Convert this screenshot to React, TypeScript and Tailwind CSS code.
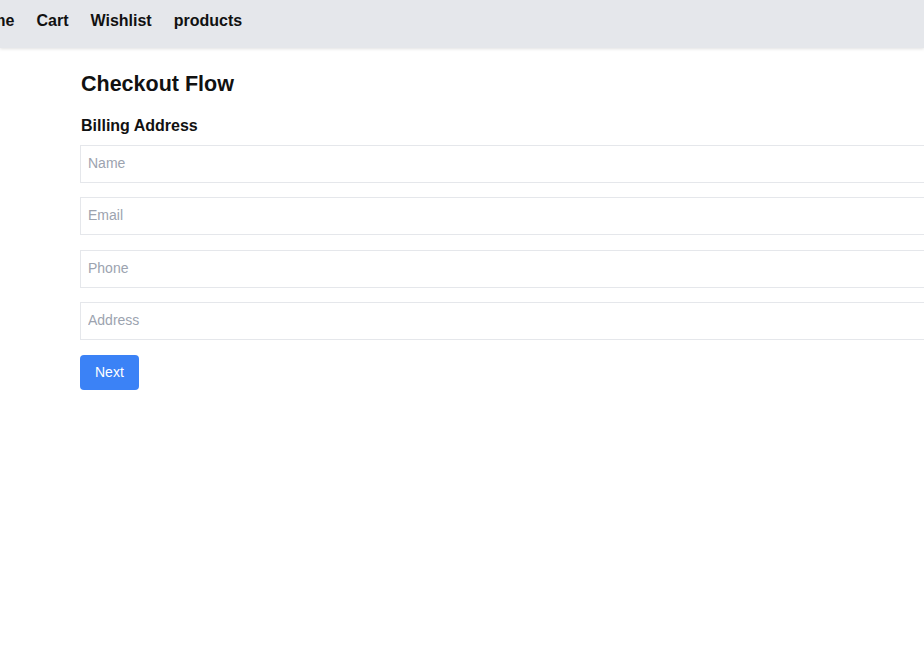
import React from "react";

export default function App() {
  const fields = ["Name", "Email", "Phone", "Address"];
  return (
    <div className="min-h-screen w-full overflow-hidden bg-white font-['Liberation_Sans',Arial,sans-serif] text-[#111]">
      <nav className="h-12 bg-[#e5e7eb] shadow-[0_1px_3px_rgba(0,0,0,0.12)]">
        <ul className="-ml-[30px] flex gap-[22px] pt-[9px] text-base font-bold leading-6 text-[#111]">
          <li>Home</li>
          <li>Cart</li>
          <li>Wishlist</li>
          <li>products</li>
        </ul>
      </nav>
      <main className="pl-20">
        <h1 className="mt-[22px] pl-px text-[21.5px] font-bold leading-7">Checkout Flow</h1>
        <h2 className="mt-[16px] pl-px text-base font-bold leading-6">Billing Address</h2>
        <div className="mt-[7px] flex w-[900px] flex-col gap-[14.3px]">
          {fields.map((f) => (
            <input
              key={f}
              placeholder={f}
              className="h-[38px] w-full border border-[#e5e7eb] pl-[7px] pr-2 pb-[2px] text-sm text-[#111] placeholder:text-[#9ca3af] outline-none"
            />
          ))}
        </div>
        <button className="mt-[15px] h-[35px] rounded bg-[#3b82f6] px-[15px] text-sm text-white">
          Next
        </button>
      </main>
    </div>
  );
}
